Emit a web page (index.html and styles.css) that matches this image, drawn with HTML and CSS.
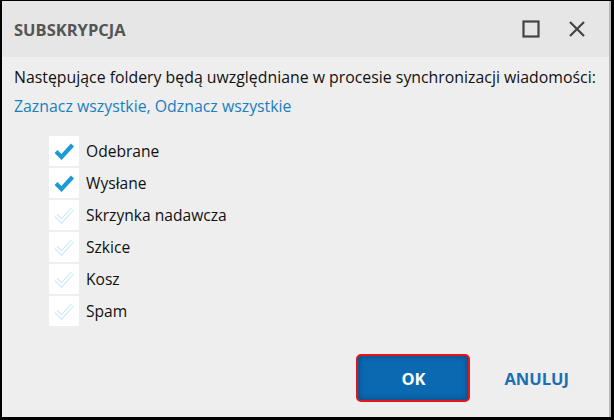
FILE: index.html
```html
<!DOCTYPE html>
<html lang="pl">
<head>
<meta charset="utf-8">
<link rel="stylesheet" href="styles.css">
</head>
<body>
<div class="window">
  <div class="titlebar">
    <div class="title">SUBSKRYPCJA</div>
    <div class="controls">
      <svg class="ctl" width="20" height="20" viewBox="0 0 20 20"><rect x="2.5" y="2.5" width="15" height="15" fill="none" stroke="#444" stroke-width="2.2"/></svg>
      <svg class="ctl" width="20" height="20" viewBox="0 0 20 20"><path d="M3 3 L17 17 M17 3 L3 17" stroke="#444" stroke-width="2.2" fill="none"/></svg>
    </div>
  </div>
  <div class="content">
    <p class="intro">Następujące foldery będą uwzględniane w procesie synchronizacji wiadomości:</p>
    <p class="links"><a class="link">Zaznacz wszystkie</a>, <a class="link">Odznacz wszystkie</a></p>
    <ul class="list">
      <li class="row"><span class="box"><svg width="30" height="30" viewBox="0 0 30 30"><path d="M7 15.5 L12.5 21 L23.5 9" fill="none" stroke="#1d9bd7" stroke-width="4.2"/></svg></span><span class="label">Odebrane</span></li>
      <li class="row"><span class="box"><svg width="30" height="30" viewBox="0 0 30 30"><path d="M7 15.5 L12.5 21 L23.5 9" fill="none" stroke="#1d9bd7" stroke-width="4.2"/></svg></span><span class="label">Wysłane</span></li>
      <li class="row"><span class="box"><svg width="30" height="30" viewBox="0 0 30 30"><path d="M7 15.5 L12.5 21 L23.5 9" fill="none" stroke="#c4e5f4" stroke-width="4"/><path d="M7 15.5 L12.5 21 L23.5 9" fill="none" stroke="#fff" stroke-width="2"/></svg></span><span class="label">Skrzynka nadawcza</span></li>
      <li class="row"><span class="box"><svg width="30" height="30" viewBox="0 0 30 30"><path d="M7 15.5 L12.5 21 L23.5 9" fill="none" stroke="#c4e5f4" stroke-width="4"/><path d="M7 15.5 L12.5 21 L23.5 9" fill="none" stroke="#fff" stroke-width="2"/></svg></span><span class="label">Szkice</span></li>
      <li class="row"><span class="box"><svg width="30" height="30" viewBox="0 0 30 30"><path d="M7 15.5 L12.5 21 L23.5 9" fill="none" stroke="#c4e5f4" stroke-width="4"/><path d="M7 15.5 L12.5 21 L23.5 9" fill="none" stroke="#fff" stroke-width="2"/></svg></span><span class="label">Kosz</span></li>
      <li class="row"><span class="box"><svg width="30" height="30" viewBox="0 0 30 30"><path d="M7 15.5 L12.5 21 L23.5 9" fill="none" stroke="#c4e5f4" stroke-width="4"/><path d="M7 15.5 L12.5 21 L23.5 9" fill="none" stroke="#fff" stroke-width="2"/></svg></span><span class="label">Spam</span></li>
    </ul>
    <div class="actions">
      <button class="btn-ok">OK</button>
      <button class="btn-cancel">ANULUJ</button>
    </div>
  </div>
</div>
</body>
</html>
```

FILE: styles.css
```css
html, body {
  margin: 0;
  padding: 0;
  background: #000;
}
body {
  width: 614px;
  height: 420px;
  overflow: hidden;
  font-family: "Open Sans", "Noto Sans", sans-serif;
}
.window {
  margin: 1px 3px 0 2px;
  width: 607px;
  height: 416px;
  background: #eeeeee;
  border-right: 2px solid #b9b9b9;
  display: flex;
  flex-direction: column;
}
.titlebar {
  height: 56px;
  background: #e6e6e6;
  display: flex;
  align-items: center;
  justify-content: space-between;
  padding: 0 22px 0 12px;
}
.title {
  font-size: 16.5px;
  font-weight: 700;
  color: #555;
}
.controls {
  display: flex;
  gap: 26px;
  align-items: center;
}
.ctl { display: block; }
.content {
  flex: 1;
  padding: 10px 12px 0 12px;
  display: flex;
  flex-direction: column;
}
.intro {
  margin: 0;
  font-size: 15.85px;
  color: #111;
  line-height: 20px;
  white-space: nowrap;
}
.links {
  margin: 9px 0 0 0;
  font-size: 15.85px;
  line-height: 20px;
  color: #1a7fc1;
  white-space: nowrap;
}
.link { color: #1a7fc1; }
.list {
  list-style: none;
  margin: 20px 0 0 35px;
  padding: 0;
  display: flex;
  flex-direction: column;
  gap: 2px;
}
.row {
  display: flex;
  align-items: center;
  height: 30px;
}
.box {
  width: 30px;
  height: 30px;
  background: #fff;
  display: block;
}
.box svg { display: block; }
.label {
  margin-left: 7px;
  font-size: 15.6px;
  color: #111;
}
.actions {
  display: flex;
  justify-content: flex-end;
  align-items: center;
  margin-top: 28px;
  padding-right: 28px;
  gap: 34px;
}
.btn-ok {
  width: 114px;
  height: 48px;
  background: #0a69b1;
  border: 2px solid #e8141c;
  border-radius: 5px;
  color: #fff;
  font-family: inherit;
  font-size: 16.5px;
  font-weight: 700;
  box-shadow: inset 0 0 6px rgba(0,0,0,0.35);
}
.btn-cancel {
  background: none;
  border: none;
  padding: 0;
  color: #1a6fb0;
  font-family: inherit;
  font-size: 16.5px;
  font-weight: 700;
}
```
